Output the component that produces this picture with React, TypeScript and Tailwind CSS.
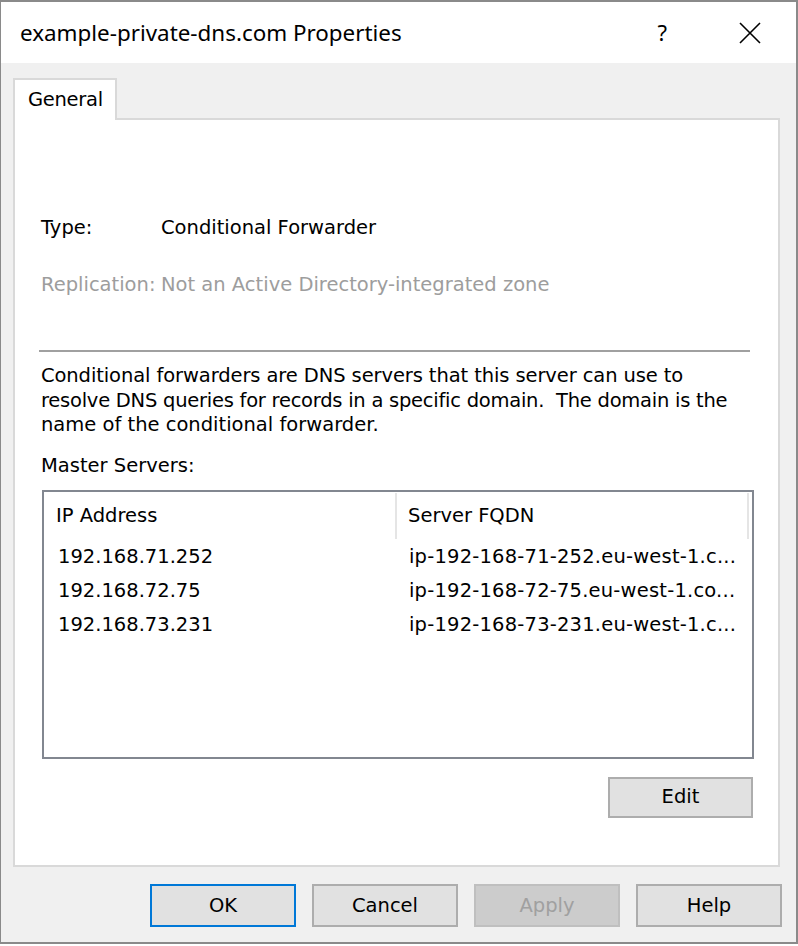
import React from "react";

const body = { fontFamily: '"DejaVu Sans", Verdana, sans-serif' };
const title = { fontFamily: '"Noto Sans", "Open Sans", sans-serif' };

const servers = [
  { ip: "192.168.71.252", fqdn: "ip-192-168-71-252.eu-west-1.c..." },
  { ip: "192.168.72.75", fqdn: "ip-192-168-72-75.eu-west-1.co..." },
  { ip: "192.168.73.231", fqdn: "ip-192-168-73-231.eu-west-1.c..." },
];

function DlgButton({
  label,
  primary,
  disabled,
}: {
  label: string;
  primary?: boolean;
  disabled?: boolean;
}) {
  return (
    <button
      className={`flex h-[43px] w-[146px] items-center justify-center border-2 text-[19.5px] ${
        primary
          ? "border-[#0078d7] bg-[#e1e1e1] text-black"
          : disabled
          ? "border-[#bfbfbf] bg-[#cccccc] text-[#a0a0a0]"
          : "border-[#adadad] bg-[#e1e1e1] text-black"
      }`}
    >
      {label}
    </button>
  );
}

export default function App() {
  return (
    <div className="h-[946px] w-[798px] bg-white" style={body}>
      <div className="flex h-[944px] w-[798px] flex-col border-2 border-l border-[#8a8a8a]">
        {/* Title bar */}
        <div className="flex h-[61px] shrink-0 items-center bg-white pl-[19px]">
          <span className="text-[22.4px] text-black" style={title}>
            example-private-dns.com Properties
          </span>
          <span className="ml-auto text-[22px] text-black" style={title}>
            ?
          </span>
          <svg className="ml-[72px] mr-[35px]" width="22" height="22" viewBox="0 0 22 22">
            <path d="M1 1 L21 21 M21 1 L1 21" stroke="#000" strokeWidth="1.6" />
          </svg>
        </div>

        {/* Body */}
        <div className="flex flex-1 flex-col bg-[#f0f0f0] pl-[12px] pr-[14px] pt-[15px]">
          <div className="relative z-10 -mb-[2px] flex h-[42px] w-[104px] items-start border-2 border-b-0 border-[#d9d9d9] bg-white pl-[13px] pt-[5px] text-[19.5px] tracking-[-0.3px] text-black">
            General
          </div>
          <div className="flex h-[749px] w-[767px] flex-col border-2 border-[#d9d9d9] bg-white pl-[26px] text-[19.5px] leading-[24px] text-black">
            <div className="mt-[96px] flex">
              <span className="w-[120px]">Type:</span>
              <span>Conditional Forwarder</span>
            </div>
            <div className="mt-[33px] flex text-[#9d9d9d]">
              <span className="w-[120px]">Replication:</span>
              <span>Not an Active Directory-integrated zone</span>
            </div>
            <div className="ml-[-2px] mt-[53px] h-[2px] w-[711px] bg-[#a0a0a0]" />
            <div className="mt-[12px] w-[720px] whitespace-nowrap leading-[24.5px]">
              <span className="block tracking-[-0.1px]">
                Conditional forwarders are DNS servers that this server can use to
              </span>
              <span className="block tracking-[-0.25px]">
                resolve DNS queries for records in a specific domain.&nbsp; The domain is the
              </span>
              <span className="block">name of the conditional forwarder.</span>
            </div>
            <div className="mt-[16px]">Master Servers:</div>
            <div className="ml-[1px] mt-[12px] flex h-[269px] w-[712px] flex-col border-2 border-[#828790] bg-white">
              <div className="flex h-[48px] items-center">
                <div className="flex h-[46px] w-[353px] items-center border-r-2 border-[#e5e5e5] pl-[12px]">
                  IP Address
                </div>
                <div className="flex h-[46px] w-[352px] items-center border-r-2 border-[#e5e5e5] pl-[11px]">
                  Server FQDN
                </div>
              </div>
              {servers.map((s) => (
                <div key={s.ip} className="flex h-[34px] items-center whitespace-nowrap">
                  <span className="w-[355px] pl-[14px]">{s.ip}</span>
                  <span className="pl-[10px] tracking-[0.2px]">{s.fqdn}</span>
                </div>
              ))}
            </div>
            <div className="mt-[18px] flex w-[712px] justify-end">
              <button className="flex h-[41px] w-[145px] items-center justify-center border-2 border-[#adadad] bg-[#e1e1e1] text-[19.5px] text-black">
                Edit
              </button>
            </div>
          </div>

          {/* Footer buttons */}
          <div className="mt-[17px] flex justify-end gap-[16px]">
            <DlgButton label="OK" primary />
            <DlgButton label="Cancel" />
            <DlgButton label="Apply" disabled />
            <DlgButton label="Help" />
          </div>
        </div>
      </div>
    </div>
  );
}
